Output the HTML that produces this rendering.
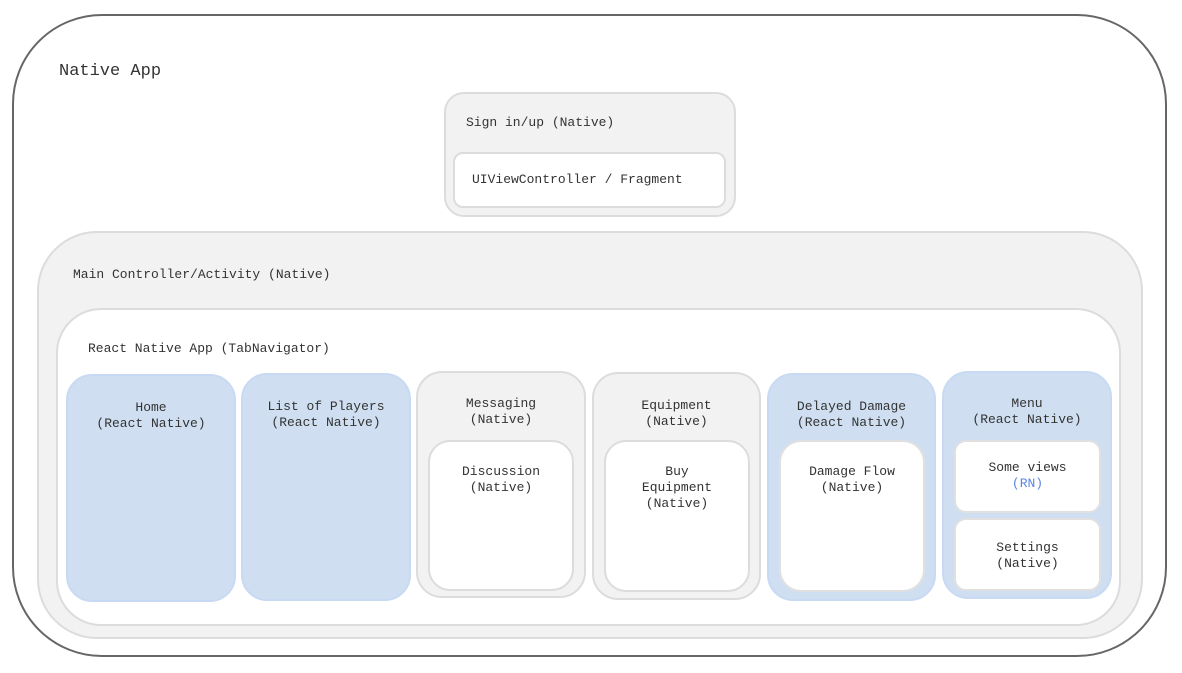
<!DOCTYPE html>
<html><head><style>
body{margin:0;width:1182px;height:673px;background:#fff;font-family:"Liberation Mono",monospace;color:#333;font-size:13px;position:relative;overflow:hidden}
div{position:absolute;box-sizing:border-box}
.g{background:#f2f2f2;border:2px solid #dcdcdc}
.w{background:#fff;border:2px solid #dcdcdc}
.b{background:#cfdff1;border:2px solid #c8daf3}
.t{text-align:center;line-height:16px;left:0;right:0}
</style></head><body>
<div style="left:12px;top:14px;width:1155px;height:643px;border:2px solid #666;border-radius:90px"></div>
<div style="left:59px;top:62px;font-size:17px">Native App</div>

<div class="g" style="left:444px;top:92px;width:292px;height:125px;border-radius:20px">
 <div style="left:20px;top:21px">Sign in/up (Native)</div>
 <div class="w" style="left:7px;top:58px;width:273px;height:56px;border-radius:10px"><div style="left:17px;top:18px">UIViewController / Fragment</div></div>
</div>

<div class="g" style="left:37px;top:231px;width:1106px;height:408px;border-radius:60px">
 <div style="left:34px;top:34px">Main Controller/Activity (Native)</div>
</div>
<div class="w" style="left:56px;top:308px;width:1065px;height:318px;border-radius:45px">
 <div style="left:30px;top:31px">React Native App (TabNavigator)</div>
</div>

<div class="b" style="left:66px;top:374px;width:170px;height:228px;border-radius:26px"><div class="t" style="top:24px">Home<br>(React Native)</div></div>
<div class="b" style="left:241px;top:373px;width:170px;height:228px;border-radius:26px"><div class="t" style="top:24px">List of Players<br>(React Native)</div></div>

<div class="g" style="left:416px;top:371px;width:170px;height:227px;border-radius:26px"><div class="t" style="top:23px">Messaging<br>(Native)</div>
 <div class="w" style="left:10px;top:67px;width:146px;height:151px;border-radius:22px"><div class="t" style="top:22px">Discussion<br>(Native)</div></div></div>

<div class="g" style="left:592px;top:372px;width:169px;height:228px;border-radius:26px"><div class="t" style="top:24px">Equipment<br>(Native)</div>
 <div class="w" style="left:10px;top:66px;width:146px;height:152px;border-radius:22px"><div class="t" style="top:22px">Buy<br>Equipment<br>(Native)</div></div></div>

<div class="b" style="left:767px;top:373px;width:169px;height:228px;border-radius:26px"><div class="t" style="top:24px">Delayed Damage<br>(React Native)</div>
 <div class="w" style="left:10px;top:65px;width:146px;height:152px;border-radius:22px;border-color:#e0e0e0"><div class="t" style="top:22px">Damage Flow<br>(Native)</div></div></div>

<div class="b" style="left:942px;top:371px;width:170px;height:228px;border-radius:26px"><div class="t" style="top:23px">Menu<br>(React Native)</div>
 <div class="w" style="left:10px;top:67px;width:147px;height:73px;border-radius:12px;border-color:#e0e0e0"><div class="t" style="top:18px">Some views<br><span style="color:#5b86e5">(RN)</span></div></div>
 <div class="w" style="left:10px;top:145px;width:147px;height:73px;border-radius:12px;border-color:#e0e0e0"><div class="t" style="top:20px">Settings<br>(Native)</div></div></div>
</body></html>
